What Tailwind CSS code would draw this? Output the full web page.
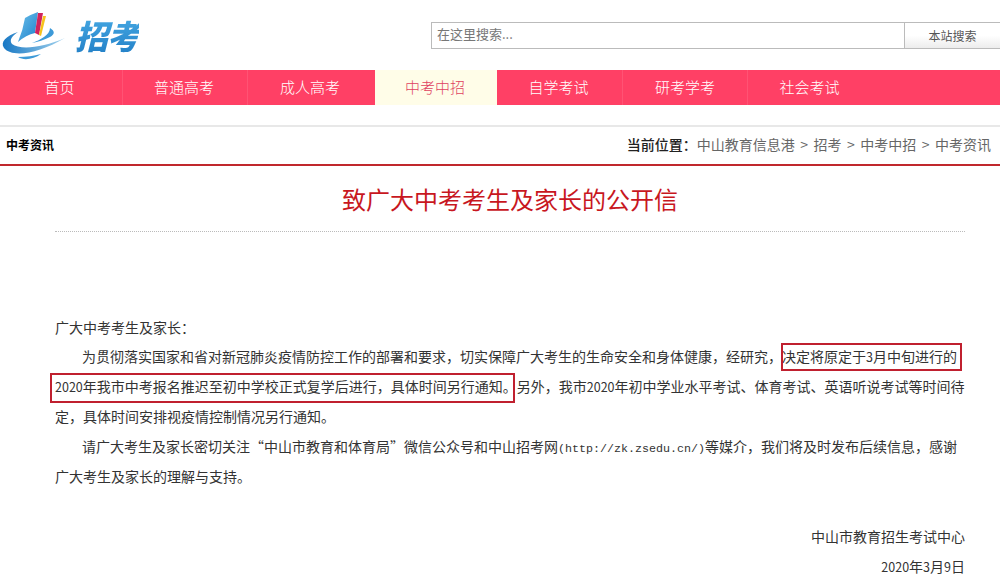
<!DOCTYPE html>
<html lang="zh-CN">
<head>
    <meta charset="UTF-8">
    <meta name="viewport" content="width=device-width, initial-scale=1.0">
    <title>致广大中考考生及家长的公开信</title>
    <script src="https://cdn.jsdelivr.net/npm/@tailwindcss/browser@4"></script>
</head>
<body class="bg-white text-[#333] font-['Noto_Sans_CJK_SC','Liberation_Sans',sans-serif] text-[14px] overflow-hidden">

    <!-- Header -->
    <header class="h-[70px] flex justify-between">
        <a href="#" class="flex items-start">
            <svg width="72" height="65" viewBox="0 0 72 65" class="shrink-0">
                <defs>
                    <linearGradient id="page" x1="0" y1="0" x2="1" y2="1">
                        <stop offset="0" stop-color="#6cc0ea"/>
                        <stop offset="1" stop-color="#1f82cc"/>
                    </linearGradient>
                    <linearGradient id="swoosh" x1="0" y1="0" x2="1" y2="0">
                        <stop offset="0" stop-color="#1878c4"/>
                        <stop offset="1" stop-color="#a5d4ee"/>
                    </linearGradient>
                </defs>
                <path d="M25 18 Q32 14 38 12 L35 33 Q26 35 18 42 Q23 30 25 18Z" fill="url(#page)"/>
                <path d="M38 13 L43 13 L39 35 L35 33Z" fill="#d0245c"/>
                <path d="M43 16 L46 16 L41 36 L39 35Z" fill="#f6c21c"/>
                <path d="M18 32 C6 36 0 42 4 48 C12 58 38 54 65 38 C42 48 20 50 12 44 C9 40 12 36 18 32Z" fill="url(#swoosh)"/>
                <path d="M50 28 C55 31 55 34 50 37 C44 40 38 42 32 43 C40 40 50 35 50 28Z" fill="#3d9ad8"/>
                <path d="M18 57 C26 57 34 56 41 54 C34 59 24 61 18 57Z" fill="#3d9ad8"/>
            </svg>
            <span class="ml-[3px] mt-[11px] text-[33px] leading-[48px] font-black italic tracking-[-1px] bg-linear-to-b from-[#49ade6] to-[#1f7cc4] bg-clip-text text-transparent">招考</span>
        </a>
        <form class="mt-[22px] flex h-[27px] w-[569px] border border-[#bbb] border-r-0 text-[13px]">
            <div class="w-[473px] pl-[5px] leading-[22px] text-[#777] border-r border-[#bbb]">在这里搜索...</div>
            <button type="button" class="flex-1 text-[12px] text-[#555] bg-linear-to-b from-white from-50% to-[#ececec]">本站搜索</button>
        </form>
    </header>

    <!-- Navbar -->
    <nav class="h-[35px] bg-[#ff4065] flex text-white text-[15px] font-light leading-[33px]">
        <a href="#" class="w-[123px] text-center pr-[3px] border-r border-white/10">首页</a>
        <a href="#" class="w-[125px] text-center pr-[2px] border-r border-white/10">普通高考</a>
        <a href="#" class="w-[124px] text-center">成人高考</a>
        <a href="#" class="w-[122px] ml-[3px] text-center pr-[2px] bg-[#fffde8] text-[#e0415f]">中考中招</a>
        <a href="#" class="w-[126px] text-center pr-[2px] border-r border-white/10">自学考试</a>
        <a href="#" class="w-[125px] text-center border-r border-white/10">研考学考</a>
        <a href="#" class="w-[125px] text-center pr-[2px]">社会考试</a>
    </nav>

    <!-- Breadcrumb -->
    <div class="mt-[20px] h-[41px] border-t-2 border-b-2 border-t-[#e8e8e8] border-b-[#c0282d] flex items-center justify-between pl-[6px] pr-[9px] pb-[2px]">
        <h2 class="text-[12px] font-bold text-black">中考资讯</h2>
        <div class="flex text-[#666]">
            <b class="font-medium text-[#222]">当前位置：</b>
            <a href="#">中山教育信息港</a><span class="mx-[5.5px]">&gt;</span>
            <a href="#">招考</a><span class="mx-[5.5px]">&gt;</span>
            <a href="#">中考中招</a><span class="mx-[5.5px]">&gt;</span>
            <a href="#">中考资讯</a>
        </div>
    </div>

    <!-- Article -->
    <article class="relative ml-[55px] mr-[35px]">
        <h1 class="h-[66px] pt-[15px] leading-[36px] text-center text-[24px] text-[#c8171e] border-b border-dotted border-[#bbb]">致广大中考考生及家长的公开信</h1>
        <div class="mt-[80px] leading-[30px] text-[14px]">
            <p class="mb-[-1px]">广大中考考生及家长：</p>
            <p class="indent-[27px]">为贯彻落实国家和省对新冠肺炎疫情防控工作的部署和要求，切实保障广大考生的生命安全和身体健康，经研究，决定将原定于<span class="text-[12.5px] leading-none">3</span>月中旬进行的<span class="text-[12.5px] leading-none">2020</span>年我市中考报名推迟至初中学校正式复学后进行，具体时间另行通知。另外，我市<span class="text-[12.5px] leading-none">2020</span>年初中学业水平考试、体育考试、英语听说考试等时间待定，具体时间安排视疫情控制情况另行通知。</p>
            <p class="indent-[27px]">请广大考生及家长密切关注“中山市教育和体育局”微信公众号和中山招考网<span class="font-['Liberation_Mono'] text-[11.67px] leading-none">(http://zk.zsedu.cn/)</span>等媒介，我们将及时发布后续信息，感谢广大考生及家长的理解与支持。</p>
            <p class="mt-[30px] text-right">中山市教育招生考试中心</p>
            <p class="text-right"><span class="text-[12.5px] leading-none">2020</span>年<span class="text-[12.5px] leading-none">3</span>月<span class="text-[12.5px] leading-none">9</span>日</p>
        </div>
        <!-- red highlight boxes over the text -->
        <div class="absolute left-[726px] top-[177px] w-[181px] h-[28px] border-2 border-[#c0202f]"></div>
        <div class="absolute left-[-5px] top-[207px] w-[465px] h-[30px] border-2 border-[#c0202f]"></div>
    </article>

</body>
</html>
